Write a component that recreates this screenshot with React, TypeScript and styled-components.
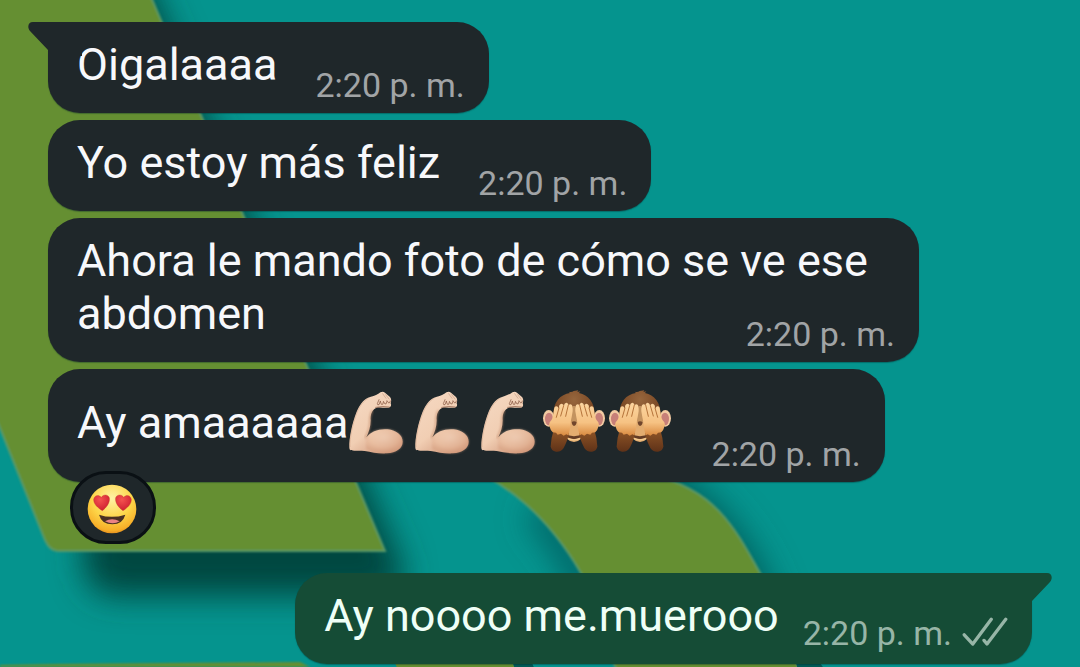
import React from 'react';
import styled, { createGlobalStyle } from 'styled-components';

const GlobalStyle = createGlobalStyle`
  *, *::before, *::after { box-sizing: border-box; }
  body { margin: 0; background: #05948e; }
`;

const Screen = styled.div`
  position: relative;
  min-height: 100vh;
  overflow: hidden;
  font-family: Roboto, "Noto Sans", sans-serif;
`;

const WallpaperArt = styled.svg`
  position: absolute;
  inset: 0;
  width: 100%;
  height: 100%;
`;

const Conversation = styled.main`
  position: relative;
  display: flex;
  flex-direction: column;
  gap: 7px;
  padding: 22px 48px 0;
`;

const Bubble = styled.article<{ $outgoing?: boolean }>`
  position: relative;
  display: flow-root;
  align-self: ${p => (p.$outgoing ? 'flex-end' : 'flex-start')};
  max-width: calc(100% - 113px);
  margin-top: ${p => (p.$outgoing ? 22 : 0)}px;
  padding: 16px 24px 8px 29px;
  border-radius: 32px;
  background: ${p => (p.$outgoing ? '#154c36' : '#1f272a')};
  color: ${p => (p.$outgoing ? '#effff7' : '#f7f8fb')};
  box-shadow: 0 1px 1px rgba(0, 40, 40, 0.35);
  font-size: 45px;
  line-height: 53px;
`;

const Tail = styled.svg<{ $side: 'left' | 'right' }>`
  position: absolute;
  top: 0;
  ${p => p.$side}: -20px;
  width: 54px;
  height: 34px;
  ${p => p.$side === 'right' && 'transform: scaleX(-1);'}
`;

const Time = styled.time<{ $outgoing?: boolean; $tall?: boolean }>`
  float: right;
  margin-top: ${p => (p.$tall ? 49 : p.$outgoing ? 24 : 27)}px;
  margin-bottom: ${p => (p.$outgoing ? 3 : 0)}px;
  margin-left: ${p => (p.$outgoing ? 24 : 38)}px;
  color: ${p => (p.$outgoing ? '#97b5a7' : '#a1a4a6')};
  font-size: 34px;
  line-height: 40px;
  white-space: nowrap;
`;

const TickMarks = styled.svg`
  width: 46px;
  height: 29px;
  margin-left: 10px;
  vertical-align: -1px;
`;

const EmojiRun = styled.span`
  margin-left: -5px;
`;

const EmojiArt = styled.svg`
  width: 66px;
  height: 75px;
  margin-top: 1px;
  vertical-align: -23px;
`;

const Reaction = styled.button`
  position: relative;
  align-self: flex-start;
  display: flex;
  align-items: center;
  justify-content: center;
  width: 86px;
  height: 73px;
  margin: -18px 0 0 22px;
  padding: 3px 2px 0 0;
  border: 3px solid #0a1014;
  border-radius: 36px;
  background: #1f272a;
`;

const Face = styled.svg`
  width: 50px;
  height: 50px;
`;

function Wallpaper() {
  return (
    <WallpaperArt viewBox="0 0 1080 667" preserveAspectRatio="none" aria-hidden="true">
      <defs>
        <filter id="shade" filterUnits="userSpaceOnUse" x="-100" y="-100" width="1280" height="900">
          <feGaussianBlur stdDeviation="16" />
        </filter>
        <filter id="edge" filterUnits="userSpaceOnUse" x="-50" y="-50" width="1180" height="800">
          <feGaussianBlur stdDeviation="1" />
        </filter>
        <clipPath id="leftOfBand">
          <path d="M400 440H450C510 470 550 520 583 573L640 680H400Z" />
        </clipPath>
      </defs>
      <rect width="1080" height="667" fill="#05948e" />
      <path d="M60 -60H130L400 560Q408 596 390 596H110Q90 592 84 570Z" fill="#004640" filter="url(#shade)" />
      <path d="M640 460C710 475 765 550 782 620L792 680H700Z" fill="#005d5c" filter="url(#shade)" />
      <g clipPath="url(#leftOfBand)">
        <path d="M535 510C562 535 582 570 600 620" fill="none" stroke="#005f60" strokeWidth="26" filter="url(#shade)" />
      </g>
      <g fill="#658f31" stroke="#5c9a68" strokeWidth="2" filter="url(#edge)">
        <path d="M-8 -8H149L385 551H58Q50 551 45 540L-8 408Z" />
        <path d="M440 455C510 480 550 520 581 573L620 680H803C788 640 778 602 760 573C736 530 716 490 655 476L600 455Z" />
      </g>
      <path d="M0 665L60 664L300 662L310 667H0Z" fill="#658f31" filter="url(#edge)" />
      <path d="M395 663H513L515 670H398Z" fill="#658f31" />
      <path d="M513 663H532L535 670H515ZM796 663H820L825 670H798Z" fill="#005b55" />
    </WallpaperArt>
  );
}

function BubbleTail({ side }: { side: 'left' | 'right' }) {
  return (
    <Tail $side={side} viewBox="0 0 54 34" aria-hidden="true">
      <path
        d="M5 0H54V34H20V28L2 9C-1 5 0 0 5 0Z"
        fill={side === 'left' ? '#1f272a' : '#154c36'}
      />
    </Tail>
  );
}

function Ticks() {
  return (
    <TickMarks viewBox="545 172 138 88" role="img" aria-label="Entregado">
      <g fill="none" stroke="#97b5a7" strokeWidth="10" strokeLinecap="round" strokeLinejoin="round">
        <path d="M551 226L577 254L633 179" />
        <path d="M611 243L620 254L677 179" />
      </g>
    </TickMarks>
  );
}

function FlexedArm() {
  return (
    <EmojiArt viewBox="12 3 198 225" role="img" aria-label="Bíceps flexionado">
      <defs>
        <linearGradient id="armSkin" x1="0" y1="0" x2="0.7" y2="1">
          <stop offset="0" stopColor="#f6dac4" />
          <stop offset="0.6" stopColor="#f1ceb3" />
          <stop offset="1" stopColor="#d0977a" />
        </linearGradient>
        <radialGradient id="bicep" cx="0.5" cy="0.35" r="0.65">
          <stop offset="0" stopColor="#f8dcc5" />
          <stop offset="0.6" stopColor="#efc4a5" />
          <stop offset="1" stopColor="#d39a7a" />
        </radialGradient>
        <filter id="armSoft">
          <feGaussianBlur stdDeviation="3" />
        </filter>
      </defs>
      <path
        d="M28 188C27 160 36 115 50 80C58 61 69 45 84 38C96 34 106 31 115 26C122 20 129 18 135 23L150 36C155 42 154 49 152 55C155 60 153 67 146 68C132 70 119 65 108 69C94 76 91 92 92 106C92 126 86 142 79 157C94 139 115 131 143 133C170 136 188 151 188 170C188 190 169 203 140 205C116 206 95 202 74 198C56 196 38 199 31 195Q28 193 28 188Z"
        fill="url(#armSkin)"
      />
      <path
        d="M78 160C90 139 116 130 143 133C170 136 188 151 188 170C188 190 169 203 140 205C112 206 93 198 79 192Z"
        fill="url(#bicep)"
        opacity="0.55"
        filter="url(#armSoft)"
      />
      <path d="M98 76C88 90 90 106 89 120C88 136 81 148 75 159" fill="none" stroke="#c48d6c" strokeWidth="5" opacity="0.7" filter="url(#armSoft)" />
      <path d="M30 186C29 160 38 115 52 81C60 62 71 47 85 40" fill="none" stroke="#c99a7c" strokeWidth="2" opacity="0.6" />
      <g fill="none" stroke="#7d4b36" strokeWidth="3" strokeLinecap="round">
        <path d="M128 26L138 40M137 29L147 42" opacity="0.25" />
        <path d="M117 44L112 56Q112 61 117 59L121 49M121 49L124 58Q130 61 130 52M130 49L135 57Q140 59 140 50M141 47L146 54Q151 54 151 48" opacity="0.65" />
        <path d="M107 67Q130 62 148 66" opacity="0.6" />
      </g>
    </EmojiArt>
  );
}

function Monkey() {
  return (
    <EmojiArt viewBox="3 0 198 225" role="img" aria-label="Mono que no ve">
      <defs>
        <radialGradient id="fur" cx="0.5" cy="0.2" r="0.8">
          <stop offset="0" stopColor="#96663d" />
          <stop offset="0.6" stopColor="#7b4824" />
          <stop offset="1" stopColor="#9a5827" />
        </radialGradient>
        <linearGradient id="sleeve" x1="0" y1="0" x2="0" y2="1">
          <stop offset="0" stopColor="#8f5527" />
          <stop offset="1" stopColor="#5f3218" />
        </linearGradient>
        <linearGradient id="hand" x1="0" y1="0" x2="0" y2="1">
          <stop offset="0" stopColor="#fbd5a0" />
          <stop offset="0.6" stopColor="#f6c283" />
          <stop offset="1" stopColor="#d98a40" />
        </linearGradient>
        <g id="monkeySide">
          <ellipse cx="23" cy="97" rx="17" ry="25" fill="#f2caa2" />
          <ellipse cx="24" cy="99" rx="12" ry="19" fill="#c77f78" />
        </g>
        <g id="monkeyArm">
          <path d="M38 132L84 140C81 158 75 172 68 186Q61 198 45 197Q30 195 29 181Q30 156 38 132Z" fill="url(#sleeve)" />
          <path
            d="M39 72Q39 62 46 61Q51 61 53 68L55 58Q60 50 67 56L68 59Q72 48 79 51L83 57Q89 52 93 58Q97 66 94 82L89 108Q88 124 86 132L82 148L76 145L68 149L60 143L50 146L45 140L35 139Q29 134 27 125Q22 116 26 109Q32 104 34 97Z"
            fill="url(#hand)"
          />
          <path d="M54 66L46 94M68 59L59 90M82 57L74 91" fill="none" stroke="#b5733a" strokeWidth="3" strokeLinecap="round" />
        </g>
      </defs>
      <use href="#monkeySide" />
      <use href="#monkeySide" transform="matrix(-1 0 0 1 198 0)" />
      <path d="M37 85C37 48 58 25 87 21L83 17Q93 19 98 15L112 13L109 18L118 16L114 21C142 27 161 50 161 85C161 120 140 150 99 156C58 150 37 120 37 85Z" fill="url(#fur)" />
      <path d="M74 85Q99 64 124 85L128 134Q125 166 99 168Q73 166 70 134Z" fill="#e3ad70" />
      <path d="M95 60H103L109 106Q99 113 89 106Z" fill="#c3935f" />
      <path d="M92 108Q99 104 107 108Q106 119 99 120Q93 119 92 108Z" fill="#70462c" />
      <path d="M72 144Q99 157 126 144Q119 159 99 159Q79 159 72 144Z" fill="#633c25" />
      <path d="M82 158Q99 165 116 158" fill="none" stroke="#f4cb90" strokeWidth="4" strokeLinecap="round" />
      <use href="#monkeyArm" />
      <use href="#monkeyArm" transform="matrix(-1 0 0 1 198 0)" />
    </EmojiArt>
  );
}

function HeartEyes() {
  return (
    <Face viewBox="110 75 150 150" role="img" aria-label="Cara con ojos de corazón">
      <defs>
        <radialGradient id="faceFill" cx="0.5" cy="0.28" r="0.75">
          <stop offset="0" stopColor="#fff2a6" />
          <stop offset="0.55" stopColor="#fdd548" />
          <stop offset="0.88" stopColor="#f7ae28" />
          <stop offset="1" stopColor="#dc821b" />
        </radialGradient>
        <radialGradient id="heartFill" cx="0.4" cy="0.3" r="0.7">
          <stop offset="0" stopColor="#f5524f" />
          <stop offset="1" stopColor="#cf2032" />
        </radialGradient>
      </defs>
      <circle cx="185" cy="150" r="73" fill="url(#faceFill)" />
      <path
        d="M156 155C143 147 129 135 130 121C132 109 145 106 153 115C159 105 173 106 177 116C180 131 168 146 156 155Z"
        fill="url(#heartFill)"
        stroke="#bf3a25"
        strokeWidth="1"
      />
      <path
        d="M218 155C231 147 244 135 243 121C241 109 228 106 220 115C214 105 200 106 196 116C193 131 205 146 218 155Z"
        fill="url(#heartFill)"
        stroke="#bf3a25"
        strokeWidth="1"
      />
      <path d="M146 167Q184 180 225 167Q217 196 186 196Q154 196 146 167Z" fill="#493023" />
      <path d="M164 187Q185 174 208 187Q188 199 164 187Z" fill="#ec8384" />
    </Face>
  );
}

export default function App() {
  return (
    <Screen>
      <GlobalStyle />
      <Wallpaper />
      <Conversation>
        <Bubble>
          <BubbleTail side="left" />
          Oigalaaaa
          <Time>2:20 p. m.</Time>
        </Bubble>
        <Bubble>
          Yo estoy más feliz
          <Time>2:20 p. m.</Time>
        </Bubble>
        <Bubble>
          Ahora le mando foto de cómo se ve ese abdomen
          <Time>2:20 p. m.</Time>
        </Bubble>
        <Bubble>
          Ay amaaaaaa
          <EmojiRun>
            <FlexedArm />
            <FlexedArm />
            <FlexedArm />
            <Monkey />
            <Monkey />
          </EmojiRun>
          <Time $tall>2:20 p. m.</Time>
        </Bubble>
        <Reaction type="button">
          <HeartEyes />
        </Reaction>
        <Bubble $outgoing>
          <BubbleTail side="right" />
          Ay noooo me.muerooo
          <Time $outgoing>
            2:20 p. m.
            <Ticks />
          </Time>
        </Bubble>
      </Conversation>
    </Screen>
  );
}
